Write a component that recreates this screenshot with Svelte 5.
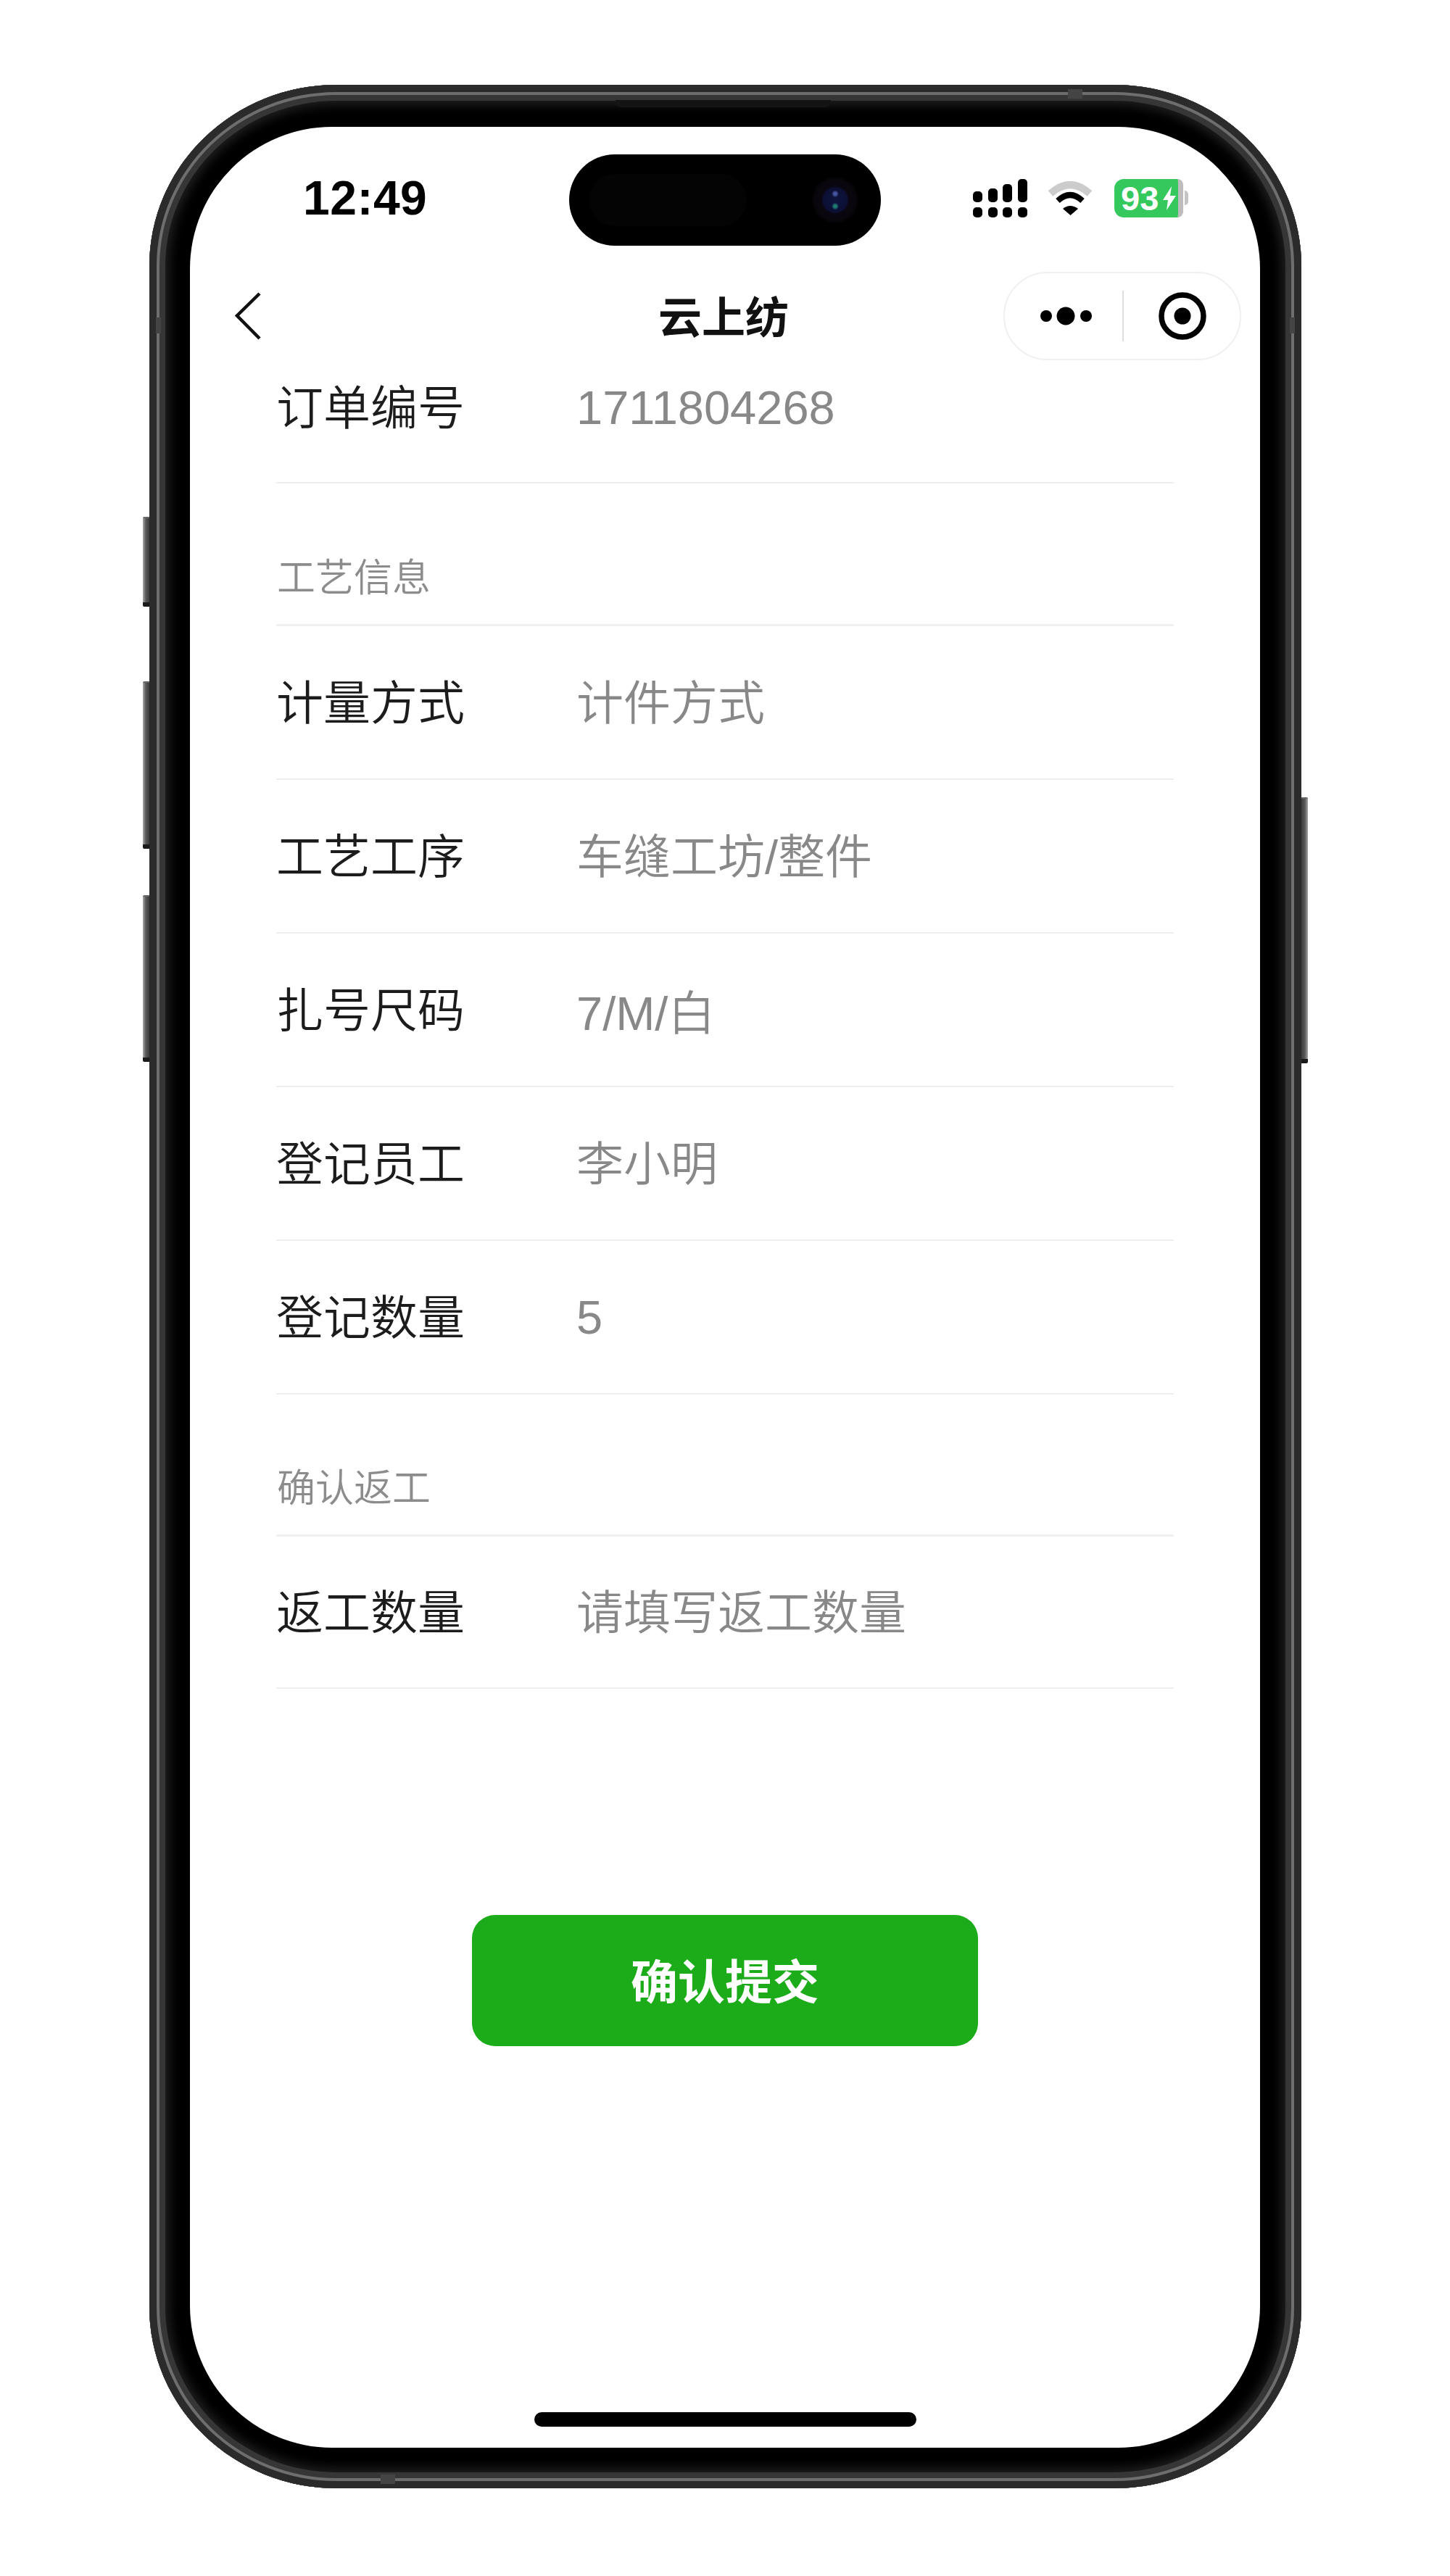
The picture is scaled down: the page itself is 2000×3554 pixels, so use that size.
<script>
  const baseRows = [
    { label: '计量方式', value: '计件方式' },
    { label: '工艺工序', value: '车缝工坊/整件' },
    { label: '扎号尺码', value: '7/M/白', num: true },
    { label: '登记员工', value: '李小明' },
    { label: '登记数量', value: '5', num: true }
  ];
</script>

<div class="canvas">
  <div class="phone">
    <span class="key vol-mute"></span>
    <span class="key vol-up"></span>
    <span class="key vol-down"></span>
    <span class="key power"></span>
    <span class="speaker"></span>
    <span class="seam seam-top"></span>
    <span class="seam seam-bottom"></span>
    <span class="seam seam-left"></span>
    <span class="seam seam-right"></span>

    <div class="screen">
      <div class="island">
        <span class="sensor"></span>
        <span class="lens"></span>
      </div>

      <div class="status">
        <span class="time">12:49</span>
        <div class="status-right">
          <svg class="signal" width="75" height="53" viewBox="0 0 75 53">
            <rect x="0" y="17" width="13" height="15" rx="5" />
            <rect x="21" y="13" width="13" height="19" rx="5" />
            <rect x="41" y="7" width="13" height="25" rx="5" />
            <rect x="62" y="0" width="13" height="32" rx="5" />
            <rect x="0" y="39" width="13" height="14" rx="5" />
            <rect x="21" y="39" width="13" height="14" rx="5" />
            <rect x="41" y="39" width="13" height="14" rx="5" />
            <rect x="62" y="39" width="13" height="14" rx="5" />
          </svg>
          <svg class="wifi" width="62" height="47" viewBox="0 0 62 47">
            <path d="M4 17 Q31 -7 58 17" fill="none" stroke="#ccc" stroke-width="10" />
            <path d="M14 27 Q31 11 48 27" fill="none" stroke="#000" stroke-width="8" />
            <path d="M21 38 Q31 30 42 38 L31.5 47 Z" fill="#000" />
          </svg>
          <div class="battery">
            <div class="battery-body">
              <span class="battery-num">93</span>
              <svg width="18" height="33" viewBox="0 0 18 33"><path d="M12 0 L0 19 H7 L5 33 L18 13 H10 Z" fill="#fff" /></svg>
            </div>
            <span class="battery-nub"></span>
          </div>
        </div>
      </div>

      <div class="nav">
        <button class="back" aria-label="返回">
          <svg width="36" height="66" viewBox="0 0 36 66">
            <path d="M34 2 L3 32.5 L34 64" fill="none" stroke="#111" stroke-width="4.5" />
          </svg>
        </button>
        <div class="title">云上纺</div>
        <div class="capsule">
          <svg width="71" height="26" viewBox="0 0 71 26">
            <circle cx="8" cy="13" r="8" />
            <circle cx="35" cy="13" r="12.5" />
            <circle cx="63" cy="13" r="8" />
          </svg>
          <span class="capsule-line"></span>
          <svg width="66" height="66" viewBox="0 0 66 66">
            <circle cx="33" cy="33" r="29" fill="none" stroke="#000" stroke-width="7.5" />
            <circle cx="33" cy="33" r="11.5" />
          </svg>
        </div>
      </div>

      <div class="form">
        <div class="row first">
          <span class="label">订单编号</span>
          <span class="value num">1711804268</span>
        </div>

        <div class="section">工艺信息</div>
        {#each baseRows as row}
          <div class="row">
            <span class="label">{row.label}</span>
            <span class="value" class:num={row.num}>{row.value}</span>
          </div>
        {/each}

        <div class="section tall">确认返工</div>
        <div class="row short">
          <span class="label">返工数量</span>
          <span class="value">请填写返工数量</span>
        </div>
      </div>

      <button class="submit">确认提交</button>

      <div class="home"></div>
    </div>
  </div>
</div>

<style>
  :global(body) {
    margin: 0;
    background: #fff;
  }
  .canvas {
    width: 2000px;
    height: 3554px;
    box-sizing: border-box;
    padding: 117px 0 0 206px;
    font-family: "Liberation Sans", "Noto Sans CJK SC", sans-serif;
    overflow: hidden;
  }
  .phone {
    position: relative;
    box-sizing: border-box;
    width: 1589px;
    height: 3316px;
    padding: 58px 57px 56px 56px;
    border-radius: 258px / 250px;
    background: #000;
    box-shadow:
      inset 0 0 0 10px #2b2b2b,
      inset 0 0 0 14px #6e6e6e,
      inset 0 0 0 22px #363636,
      inset 0 0 14px 28px #1f1f1f;
  }
  .key {
    position: absolute;
    box-sizing: border-box;
    width: 9px;
    background: linear-gradient(to right, #a8a8a8, #5a5a5a 45%, #3c3c3c);
    border-top: 2px solid #666;
    border-bottom: 6px solid #1a1a1a;
    border-radius: 2px 0 0 2px;
  }
  .vol-mute { left: -9px; top: 596px; height: 124px; }
  .vol-up { left: -9px; top: 823px; height: 231px; }
  .vol-down { left: -9px; top: 1118px; height: 230px; }
  .power {
    right: -9px;
    top: 983px;
    height: 367px;
    background: linear-gradient(to left, #a8a8a8, #5a5a5a 45%, #3c3c3c);
    border-radius: 0 2px 2px 0;
  }
  .speaker {
    position: absolute;
    left: 643px;
    top: 21px;
    width: 297px;
    height: 10px;
    background: #141414;
    border-radius: 0 0 8px 8px;
  }
  .seam {
    position: absolute;
    background: #444;
  }
  .seam-top { left: 1267px; top: 6px; width: 20px; height: 13px; }
  .seam-bottom { left: 319px; bottom: 6px; width: 20px; height: 13px; }
  .seam-left { left: 9px; top: 321px; width: 7px; height: 22px; }
  .seam-right { right: 9px; top: 321px; width: 7px; height: 22px; }

  .screen {
    position: relative;
    width: 1476px;
    height: 3202px;
    display: flex;
    flex-direction: column;
    background: #fff;
    border-radius: 196px;
    overflow: hidden;
  }
  .island {
    position: absolute;
    left: 50%;
    top: 38px;
    width: 430px;
    height: 126px;
    transform: translateX(-50%);
    background: #000;
    border-radius: 63px;
  }
  .sensor {
    position: absolute;
    left: 28px;
    top: 27px;
    width: 217px;
    height: 72px;
    background: #040404;
    border-radius: 36px;
  }
  .lens {
    position: absolute;
    right: 30px;
    top: 30px;
    width: 66px;
    height: 66px;
    border-radius: 50%;
    background:
      radial-gradient(circle at 50% 37%, #45559f 0 2px, transparent 5px),
      radial-gradient(circle at 50% 63%, #1f7a72 0 2px, transparent 5px),
      radial-gradient(circle closest-side, #0f1440 0, #0c1034 50%, #0a0610 58%, #0a060c 85%, #000 100%);
  }
  .status {
    box-sizing: border-box;
    height: 200px;
    flex: none;
    display: flex;
    align-items: center;
    justify-content: space-between;
    padding: 0 99px 4px 156px;
  }
  .time {
    font-size: 66px;
    font-weight: 700;
    letter-spacing: 0.5px;
    color: #000;
  }
  .status-right {
    display: flex;
    align-items: center;
    gap: 28px;
  }
  .signal { fill: #000; display: block; }
  .wifi { display: block; margin-right: 2px; }
  .battery {
    display: flex;
    align-items: center;
  }
  .battery-body {
    width: 79px;
    height: 53px;
    padding-left: 9px;
    display: flex;
    align-items: center;
    gap: 5px;
    background: #35c85c;
    border-right: 7px solid #bdbdbd;
    border-radius: 13px 8px 8px 13px;
  }
  .battery-num {
    width: 53px;
    font-size: 47px;
    font-weight: 700;
    line-height: 53px;
    color: #fff;
  }
  .battery-nub {
    width: 5px;
    height: 20px;
    margin-left: 2px;
    background: #c4c4c4;
    border-radius: 0 5px 5px 0;
  }
  .nav {
    position: relative;
    z-index: 1;
    flex: none;
    height: 122px;
    display: grid;
    grid-template-columns: 1fr auto 1fr;
    align-items: center;
    padding: 0 26px 0 62px;
  }
  .back {
    justify-self: start;
    display: block;
    padding: 0;
    border: 0;
    background: none;
  }
  .back svg { display: block; }
  .title {
    margin-left: -40px;
    padding-bottom: 6px;
    font-size: 60px;
    font-weight: 700;
    color: #111;
  }
  .capsule {
    justify-self: end;
    box-sizing: border-box;
    width: 328px;
    height: 122px;
    display: flex;
    align-items: center;
    padding-left: 49px;
    border: 2px solid #f0f0f0;
    border-radius: 61px;
    background: #fff;
  }
  .capsule svg { display: block; flex: none; }
  .capsule-line {
    width: 2px;
    height: 70px;
    margin: 0 48px 0 42px;
    background: #dedede;
  }
  .form {
    flex: none;
    margin-top: -42px;
    padding: 0 119px;
  }
  .row {
    box-sizing: border-box;
    height: 212px;
    display: flex;
    align-items: center;
    padding-bottom: 8px;
    border-bottom: 2px solid #eee;
    font-size: 65px;
    font-weight: 350;
  }
  .row.first { padding-bottom: 4px; }
  .row.short { height: 210px; }
  .label {
    flex: none;
    width: 414px;
    color: #1c1c1c;
  }
  .value {
    color: #888;
  }
  .value.num { padding-top: 8px; }
  .section {
    box-sizing: border-box;
    height: 197px;
    display: flex;
    align-items: flex-end;
    padding: 0 0 33px 1px;
    border-bottom: 3px solid #f0f0f0;
    font-size: 53px;
    font-weight: 350;
    line-height: 60px;
    color: #8c8c8c;
  }
  .section.tall { height: 196px; }
  .submit {
    flex: none;
    align-self: center;
    width: 698px;
    height: 181px;
    margin-top: 312px;
    padding: 0 0 6px;
    border: 0;
    border-radius: 32px;
    background: #1cac1a;
    color: #fff;
    font-family: inherit;
    font-size: 65px;
    font-weight: 700;
  }
  .home {
    flex: none;
    align-self: center;
    width: 527px;
    height: 20px;
    margin-top: auto;
    margin-bottom: 29px;
    background: #000;
    border-radius: 10px;
  }
</style>
